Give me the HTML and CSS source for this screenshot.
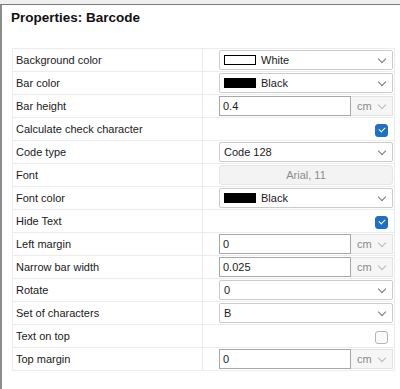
FILE: index.html
```html
<!DOCTYPE html>
<html lang="en">
<head>
    <meta charset="UTF-8">
    <title>Properties: Barcode</title>
    <link rel="stylesheet" href="styles.css">
</head>
<body>
    <div class="topbar"></div>
    <div class="panel">
        <h1 class="title">Properties: Barcode</h1>

        <table class="props">
            <tr>
                <td class="label">Background color</td>
                <td class="value">
                    <div class="select"><span class="swatch white"></span><span class="text">White</span><span class="chev"></span></div>
                </td>
            </tr>
            <tr>
                <td class="label">Bar color</td>
                <td class="value">
                    <div class="select"><span class="swatch black"></span><span class="text">Black</span><span class="chev"></span></div>
                </td>
            </tr>
            <tr>
                <td class="label">Bar height</td>
                <td class="value">
                    <div class="unit-field"><div class="input">0.4</div><div class="unit">cm<span class="chev light"></span></div></div>
                </td>
            </tr>
            <tr>
                <td class="label">Calculate check character</td>
                <td class="value check-cell"><span class="check on"></span></td>
            </tr>
            <tr>
                <td class="label">Code type</td>
                <td class="value">
                    <div class="select"><span class="text">Code 128</span><span class="chev"></span></div>
                </td>
            </tr>
            <tr>
                <td class="label">Font</td>
                <td class="value"><div class="font-btn">Arial, 11</div></td>
            </tr>
            <tr>
                <td class="label">Font color</td>
                <td class="value">
                    <div class="select"><span class="swatch black"></span><span class="text">Black</span><span class="chev"></span></div>
                </td>
            </tr>
            <tr>
                <td class="label">Hide Text</td>
                <td class="value check-cell"><span class="check on"></span></td>
            </tr>
            <tr>
                <td class="label">Left margin</td>
                <td class="value">
                    <div class="unit-field"><div class="input">0</div><div class="unit">cm<span class="chev light"></span></div></div>
                </td>
            </tr>
            <tr>
                <td class="label">Narrow bar width</td>
                <td class="value">
                    <div class="unit-field"><div class="input">0.025</div><div class="unit">cm<span class="chev light"></span></div></div>
                </td>
            </tr>
            <tr>
                <td class="label">Rotate</td>
                <td class="value">
                    <div class="select"><span class="text">0</span><span class="chev"></span></div>
                </td>
            </tr>
            <tr>
                <td class="label">Set of characters</td>
                <td class="value">
                    <div class="select"><span class="text">B</span><span class="chev"></span></div>
                </td>
            </tr>
            <tr>
                <td class="label">Text on top</td>
                <td class="value check-cell"><span class="check"></span></td>
            </tr>
            <tr>
                <td class="label">Top margin</td>
                <td class="value">
                    <div class="unit-field"><div class="input">0</div><div class="unit">cm<span class="chev light"></span></div></div>
                </td>
            </tr>
        </table>
    </div>
</body>
</html>
```

FILE: styles.css
```css
/* Reset */
* {
    margin: 0;
    padding: 0;
    box-sizing: border-box;
}

body {
    background: #fff;
    color: #1a1a1a;
    font-family: 'Liberation Sans', Arial, sans-serif;
    font-size: 11px;
    width: 400px;
    height: 389px;
    overflow: hidden;
}

/* Window frame */
.topbar {
    height: 5px;
    background: #efefef;
    border-bottom: 1px solid #7c7c7c;
}

.panel {
    height: 384px;
    border-left: 2px solid #8c8c8c;
    padding: 5px 5px 0 10px;
}

.title {
    font-size: 13.5px;
    font-weight: bold;
    line-height: 16px;
    color: #111;
    margin-left: -1px;
    height: 38px;
}

/* Property grid */
.props {
    width: 383px;
    border-collapse: collapse;
    table-layout: fixed;
}

.props td {
    height: 23px;
    border: 1px solid #ececec;
    vertical-align: middle;
}

.props .label {
    width: 190px;
    padding-left: 3px;
    color: #1a1a1a;
}

.props .value {
    padding: 0 1px 0 16px;
}

/* Select box */
.select {
    display: flex;
    align-items: center;
    height: 20px;
    border: 1px solid #cbcbcb;
    border-radius: 2px;
    padding-left: 4px;
    background: #fff;
}

.select .text {
    flex: 1;
}

.swatch {
    width: 32px;
    height: 10px;
    margin-right: 5px;
    border: 1px solid #000;
}

.swatch.white {
    background: #fff;
}

.swatch.black {
    background: #000;
}

.chev {
    width: 6px;
    height: 6px;
    border-right: 1px solid #777;
    border-bottom: 1px solid #777;
    transform: rotate(45deg);
    margin: 0 7px 3px 0;
}

.chev.light {
    border-color: #b8b8b8;
}

/* Number field with unit */
.unit-field {
    display: flex;
    height: 20px;
}

.unit-field .input {
    width: 132px;
    border: 1px solid #a8a8a8;
    padding-left: 3px;
    line-height: 18px;
}

.unit-field .unit {
    flex: 1;
    display: flex;
    align-items: center;
    justify-content: space-between;
    padding-left: 6px;
    background: #f6f6f6;
    border: 1px solid #e2e2e2;
    border-left: none;
    color: #8a8a8a;
}

/* Font picker */
.font-btn {
    height: 20px;
    line-height: 18px;
    text-align: center;
    background: #f3f3f3;
    border: 1px solid #e6e6e6;
    border-radius: 3px;
    color: #8c8c8c;
}

/* Checkboxes */
.check-cell {
    text-align: right;
}

.check {
    display: inline-block;
    width: 13px;
    height: 13px;
    border-radius: 3px;
    border: 1px solid #b5b5b5;
    background: #fafafa;
    margin: 4px 5px 0 0;
    position: relative;
}

.check.on {
    background: #1f6fc8;
    border-color: #1f6fc8;
}

.check.on::after {
    content: "";
    position: absolute;
    left: 3px;
    top: 2px;
    width: 5px;
    height: 3px;
    border-left: 1px solid #fff;
    border-bottom: 1px solid #fff;
    transform: rotate(-45deg);
}
```
